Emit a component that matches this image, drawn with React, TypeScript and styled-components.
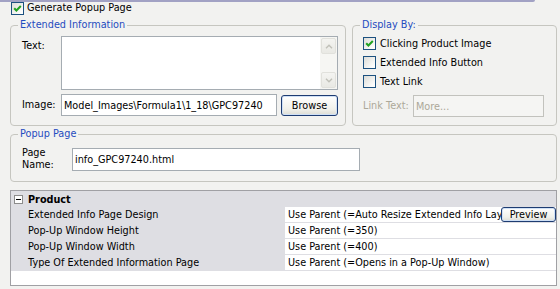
import React from 'react';
import styled, { createGlobalStyle } from 'styled-components';

const GlobalStyle = createGlobalStyle`
  html, body {
    margin: 0;
    padding: 0;
  }
  body {
    background: #f2f2f0;
    font-family: 'DejaVu Sans', Tahoma, sans-serif;
    font-size: 9.7px;
    color: #000;
  }
`;

const Page = styled.div`
  width: 560px;
  height: 289px;
  overflow: hidden;
  display: flex;
  flex-direction: column;
`;

const TopBar = styled.div`
  flex: none;
  width: 535px;
  height: 2px;
  background: #a2a2c4;
  border-bottom-right-radius: 2px;
`;

const HeaderRow = styled.div`
  display: flex;
  align-items: center;
  gap: 3px;
  height: 12px;
  margin: 0 0 5px 11px;
  line-height: 12px;
`;

const GroupRow = styled.div`
  display: flex;
  gap: 6px;
  margin-left: 10px;
`;

const Group = styled.fieldset<{ $w: number; $h: number }>`
  box-sizing: border-box;
  width: ${({ $w }) => $w}px;
  height: ${({ $h }) => $h}px;
  min-width: 0;
  margin: 0;
  padding: 0;
  border: 1px solid #c6c6c0;
  border-radius: 4px;
`;

const Legend = styled.legend`
  margin-left: 7px;
  padding: 0 2px;
  line-height: 12px;
  color: #1f4cbf;
`;

const ExtBody = styled.div`
  padding: 5px 0 0 11px;
  display: flex;
  flex-direction: column;
  gap: 4px;
`;

const FormRow = styled.div<{ $align?: string }>`
  display: flex;
  align-items: ${({ $align }) => $align || 'center'};
`;

const FieldLabel = styled.span<{ $w: number; $top?: number; $disabled?: boolean }>`
  flex: none;
  width: ${({ $w }) => $w}px;
  padding-top: ${({ $top }) => $top || 0}px;
  line-height: 12px;
  color: ${({ $disabled }) => ($disabled ? '#aca899' : '#000')};
`;

const TextBox = styled.div`
  box-sizing: border-box;
  width: 277px;
  height: 54px;
  border: 1px solid #a5acb2;
  background: #fff;
  display: flex;
  justify-content: flex-end;
`;

const ScrollBar = styled.div`
  width: 17px;
  display: flex;
  flex-direction: column;
  background: #f6f6f3;
  padding: 1px 0;
  box-sizing: border-box;
`;

const ScrollButton = styled.div`
  box-sizing: border-box;
  height: 16px;
  margin: 0 1px;
  border: 1px solid #e1e1dc;
  border-radius: 2px;
  background: linear-gradient(#f4f4f1, #e9e9e4);
  display: flex;
  align-items: center;
  justify-content: center;
`;

const ScrollTrack = styled.div`
  flex: 1;
`;

const Input = styled.div<{ $w: number; $h: number; $disabled?: boolean }>`
  box-sizing: border-box;
  flex: none;
  width: ${({ $w }) => $w}px;
  height: ${({ $h }) => $h}px;
  border: 1px solid ${({ $disabled }) => ($disabled ? '#c2c2bd' : '#a5acb2')};
  background: ${({ $disabled }) => ($disabled ? '#f5f5f3' : '#fff')};
  color: ${({ $disabled }) => ($disabled ? '#aca899' : '#000')};
  padding: 0 2px;
  display: flex;
  align-items: center;
  white-space: nowrap;
  overflow: hidden;
`;

const XpButton = styled.div<{ $w: number; $h: number }>`
  box-sizing: border-box;
  flex: none;
  width: ${({ $w }) => $w}px;
  height: ${({ $h }) => $h}px;
  border: 1px solid #1e3c72;
  border-radius: 3px;
  background: linear-gradient(#ffffff, #f0f0ea 70%, #dcdcd4);
  box-shadow: inset 0 0 0 1px #cfe0f6;
  display: flex;
  align-items: center;
  justify-content: center;
  line-height: 11px;
`;

const DisplayBody = styled.div`
  padding: 3px 0 0 10px;
  display: flex;
  flex-direction: column;
`;

const CheckRow = styled.div`
  display: flex;
  align-items: center;
  gap: 4px;
  height: 19px;
`;

const Box = styled.span`
  box-sizing: border-box;
  flex: none;
  width: 13px;
  height: 13px;
  border: 1px solid #1c5180;
  background: linear-gradient(135deg, #dcdcd7 0%, #fdfdfc 85%);
  display: flex;
  align-items: center;
  justify-content: center;
`;

const LinkRow = styled(FormRow)`
  margin-top: 4px;
`;

const PopupWrap = styled.div`
  margin: 2px 0 0 10px;
`;

const PopupBody = styled.div`
  padding: 7px 0 0 11px;
  display: flex;
  align-items: center;
`;

const Grid = styled.div`
  box-sizing: border-box;
  margin: 8px 0 0 10px;
  width: 547px;
  height: 96px;
  border: 1px solid #a0a0a4;
  background: #fff;
  display: flex;
  flex-direction: column;
`;

const Category = styled.div`
  height: 16px;
  background: #dedee3;
  display: flex;
  align-items: center;
  font-weight: bold;
`;

const Minus = styled.span`
  box-sizing: border-box;
  width: 9px;
  height: 9px;
  margin: 0 5px 0 3px;
  border: 1px solid #8c8c8c;
  background: #fff;
  display: flex;
  align-items: center;
  justify-content: center;
  &::after {
    content: '';
    width: 5px;
    height: 1px;
    background: #000;
  }
`;

const PropRow = styled.div`
  display: grid;
  grid-template-columns: 273px 1fr;
  column-gap: 1px;
  height: 16px;
  background: #dedee3;
`;

const PropName = styled.div`
  padding-left: 17px;
  line-height: 15px;
  white-space: nowrap;
`;

const PropValue = styled.div`
  height: 15px;
  background: #fff;
  padding-left: 3px;
  display: flex;
  align-items: center;
  min-width: 0;
`;

const ValueText = styled.span`
  flex: 1;
  min-width: 0;
  overflow: hidden;
  white-space: nowrap;
`;

const Check = ({ checked }: { checked?: boolean }) => (
  <Box>
    {checked && (
      <svg width="11" height="11" viewBox="0 0 11 11">
        <path d="M2.2 5.2l2.2 2.3L8.8 3" fill="none" stroke="#21a121" strokeWidth="2" />
      </svg>
    )}
  </Box>
);

const Chevron = ({ up }: { up?: boolean }) => (
  <svg width="8" height="5" viewBox="0 0 8 5">
    <path d={up ? 'M1 4.2L4 1.2l3 3' : 'M1 0.8L4 3.8l3-3'} fill="none" stroke="#c0c0b8" strokeWidth="1.4" />
  </svg>
);

const props = [
  { name: 'Extended Info Page Design', value: 'Use Parent (=Auto Resize Extended Info Layout)', preview: true },
  { name: 'Pop-Up Window Height', value: 'Use Parent (=350)' },
  { name: 'Pop-Up Window Width', value: 'Use Parent (=400)' },
  { name: 'Type Of Extended Information Page', value: 'Use Parent (=Opens in a Pop-Up Window)' },
];

export default function App() {
  return (
    <Page>
      <GlobalStyle />
      <TopBar />
      <HeaderRow>
        <Check checked />
        <span>Generate Popup Page</span>
      </HeaderRow>

      <GroupRow>
        <Group $w={336} $h={107}>
          <Legend>Extended Information</Legend>
          <ExtBody>
            <FormRow $align="flex-start">
              <FieldLabel $w={39} $top={4}>Text:</FieldLabel>
              <TextBox>
                <ScrollBar>
                  <ScrollButton>
                    <Chevron up />
                  </ScrollButton>
                  <ScrollTrack />
                  <ScrollButton>
                    <Chevron />
                  </ScrollButton>
                </ScrollBar>
              </TextBox>
            </FormRow>
            <FormRow>
              <FieldLabel $w={39}>Image:</FieldLabel>
              <Input $w={216} $h={22}>Model_Images\Formula1\1_18\GPC97240</Input>
              <XpButton $w={57} $h={21} style={{ marginLeft: 4 }}>
                Browse
              </XpButton>
            </FormRow>
          </ExtBody>
        </Group>

        <Group $w={205} $h={107}>
          <Legend>Display By:</Legend>
          <DisplayBody>
            <CheckRow>
              <Check checked />
              <span>Clicking Product Image</span>
            </CheckRow>
            <CheckRow>
              <Check />
              <span>Extended Info Button</span>
            </CheckRow>
            <CheckRow>
              <Check />
              <span>Text Link</span>
            </CheckRow>
            <LinkRow>
              <FieldLabel $w={50} $disabled>
                Link Text:
              </FieldLabel>
              <Input $w={131} $h={22} $disabled>
                More...
              </Input>
            </LinkRow>
          </DisplayBody>
        </Group>
      </GroupRow>

      <PopupWrap>
        <Group $w={547} $h={54}>
          <Legend>Popup Page</Legend>
          <PopupBody>
            <FieldLabel $w={50}>
              Page
              <br />
              Name:
            </FieldLabel>
            <Input $w={288} $h={23}>info_GPC97240.html</Input>
          </PopupBody>
        </Group>
      </PopupWrap>

      <Grid>
        <Category>
          <Minus />
          Product
        </Category>
        {props.map((p) => (
          <PropRow key={p.name}>
            <PropName>{p.name}</PropName>
            <PropValue>
              <ValueText>{p.value}</ValueText>
              {p.preview && (
                <XpButton $w={55} $h={15}>
                  Preview
                </XpButton>
              )}
            </PropValue>
          </PropRow>
        ))}
      </Grid>
    </Page>
  );
}
